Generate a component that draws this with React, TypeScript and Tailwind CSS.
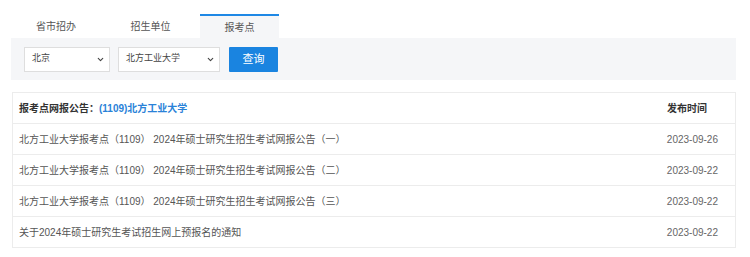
import { ChevronDown } from "lucide-react";

const rows = [
  { title: "北方工业大学报考点（1109） 2024年硕士研究生招生考试网报公告（一）", date: "2023-09-26" },
  { title: "北方工业大学报考点（1109） 2024年硕士研究生招生考试网报公告（二）", date: "2023-09-22" },
  { title: "北方工业大学报考点（1109） 2024年硕士研究生招生考试网报公告（三）", date: "2023-09-22" },
  { title: "关于2024年硕士研究生考试招生网上预报名的通知", date: "2023-09-22" },
];

function Select({ label, width }: { label: string; width: string }) {
  return (
    <div className={`${width} h-[25px] bg-white border border-[#dedede] flex items-center justify-between pl-[7px] pr-[4px] text-[9px] text-[#444]`}>
      <span>{label}</span>
      <ChevronDown className="h-[9px] w-[9px] text-[#444]" strokeWidth={3} />
    </div>
  );
}

export default function App() {
  const font = { fontFamily: '"Liberation Sans", Arial, "Noto Sans CJK SC", sans-serif' };
  return (
    <div className="w-[750px] h-[257px] bg-white" style={font}>
      <div className="pt-[14px] pl-[11px] pr-[14px]">
        <div className="flex h-[24px] text-[10px] text-[#555]">
          <div className="w-[90px] flex items-center justify-center">省市招办</div>
          <div className="w-[99px] flex items-center justify-center">招生单位</div>
          <div className="w-[79px] flex items-center justify-center bg-[#f5f6f8] border-t-2 border-[#1e88e5]">报考点</div>
        </div>
        <div className="bg-[#f5f6f8] h-[42px] flex items-center gap-[8px] pl-[13px]">
          <Select label="北京" width="w-[86px]" />
          <Select label="北方工业大学" width="w-[102px]" />
          <button className="ml-[1px] w-[49px] h-[25px] bg-[#1a84e0] text-white text-[11px] rounded-[1px]">查询</button>
        </div>
      </div>
      <div className="mt-[12px] mx-[12px] w-[724px] border border-[#ececec] text-[10px]">
        <div className="h-[30px] flex items-center justify-between pl-[6px] pr-[28px] font-bold">
          <div className="text-[#333]">
            报考点网报公告：<span className="text-[#2a82d8]">(1109)北方工业大学</span>
          </div>
          <div className="text-[#333]">发布时间</div>
        </div>
        {rows.map((r, i) => (
          <div key={i} className="h-[31px] border-t border-[#ececec] flex items-center justify-between pl-[6px] pr-[17px] text-[#555]">
            <div>{r.title}</div>
            <div className="text-[#666]">{r.date}</div>
          </div>
        ))}
      </div>
    </div>
  );
}
